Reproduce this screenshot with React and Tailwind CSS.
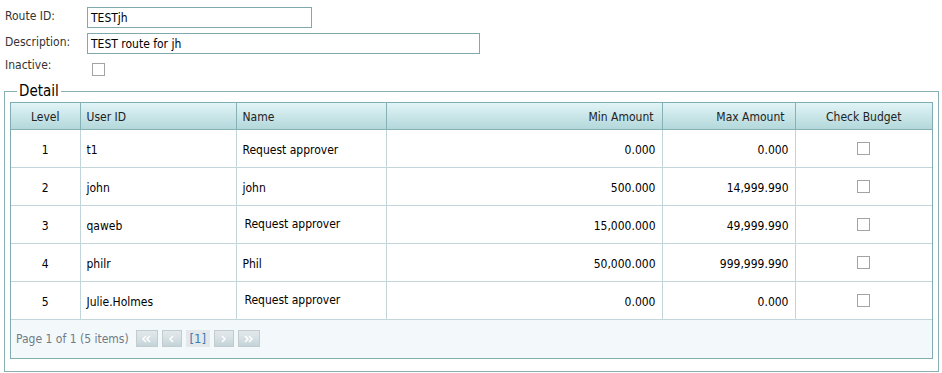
import React from 'react';

const rows = [
  { level: 1, user: 't1', name: 'Request approver', min: '0.000', max: '0.000' },
  { level: 2, user: 'john', name: 'john', min: '500.000', max: '14,999.990' },
  { level: 3, user: 'qaweb', name: 'Request approver', min: '15,000.000', max: '49,999.990', shift: true },
  { level: 4, user: 'philr', name: 'Phil', min: '50,000.000', max: '999,999.990' },
  { level: 5, user: 'Julie.Holmes', name: 'Request approver', min: '0.000', max: '0.000', shift: true },
];

function Box() {
  return <span className="inline-block h-[13px] w-[13px] border border-[#a3a3a3] bg-white align-middle" />;
}

// chevrons for the pager buttons
function Chevs({ dir = 'left', double = false }) {
  const pts = dir === 'left' ? ['6,3 3,6 6,9', '10,3 7,6 10,9'] : ['3,3 6,6 3,9', '7,3 10,6 7,9'];
  const single = dir === 'left' ? '8,3 5,6 8,9' : '5,3 8,6 5,9';
  return (
    <svg width="13" height="12" viewBox="0 0 13 12" fill="none" stroke="white" strokeWidth="1.5">
      {double ? pts.map((p) => <polyline key={p} points={p} />) : <polyline points={single} />}
    </svg>
  );
}

function PagerBtn({ children, w = 'w-[22px]' }) {
  return (
    <span className={`flex h-[17px] ${w} items-center justify-center border border-[#c4cbcf] bg-gradient-to-b from-[#e2e8eb] via-[#d6e0e4] to-[#c2d3d8]`}>
      {children}
    </span>
  );
}

export default function App() {
  return (
    <div className="h-[373px] w-[942px] bg-white font-['DejaVu_Sans_Condensed','DejaVu_Sans',sans-serif] text-[12px] text-[#333]">
      <div className="pt-[7px]">
        <div className="flex h-[21px] items-center">
          <span className="w-[87px] pl-[5px] -mt-[4px]">Route ID:</span>
          <div className="flex h-[21px] w-[225px] items-center border border-[#80a9ae] pl-[3px] text-black">TESTjh</div>
        </div>
        <div className="mt-[5px] flex h-[21px] items-center">
          <span className="w-[87px] pl-[5px] -mt-[4px]">Description:</span>
          <div className="flex h-[21px] w-[393px] items-center border border-[#80a9ae] pl-[3px] text-black">TEST route for jh</div>
        </div>
        <div className="mt-[3px] flex h-[21px] items-center">
          <span className="w-[92px] pl-[5px] -mt-[6px]">Inactive:</span>
          <span className="mt-[4px] inline-block h-[13px] w-[13px] border border-[#a3a3a3]" />
        </div>
      </div>

      <fieldset className="mx-[4px] mt-[4px] h-[290px] w-[934px] border border-[#87aeb0] px-[5px] pb-0 pt-0">
        <legend className="ml-[7px] px-[2px] text-[15px] leading-[18px] text-black">Detail</legend>
        <div className="mt-[2px] w-[923px] border border-[#7fadb2]">
          <table className="w-full border-collapse text-black">
            <thead>
              <tr className="h-[26px] bg-gradient-to-b from-[#e1f4f6] to-[#b3d8db] text-[#222]">
                <th className="w-[69px] border-r border-b border-[#86b2b6] pt-[2px] font-normal">Level</th>
                <th className="w-[156px] border-r border-b border-[#86b2b6] pl-[6px] pt-[2px] text-left font-normal">User ID</th>
                <th className="w-[150px] border-r border-b border-[#86b2b6] pl-[6px] pt-[2px] text-left font-normal">Name</th>
                <th className="w-[276px] border-r border-b border-[#86b2b6] pr-[8px] pt-[2px] text-right font-normal">Min Amount</th>
                <th className="w-[133px] border-r border-b border-[#86b2b6] pr-[10px] pt-[2px] text-right font-normal">Max Amount</th>
                <th className="border-b border-[#86b2b6] pt-[2px] font-normal">Check Budget</th>
              </tr>
            </thead>
            <tbody>
              {rows.map((r) => (
                <tr key={r.level} className="h-[38px]">
                  <td className="border-r border-b border-[#c2d5da] pt-[3px] text-center">{r.level}</td>
                  <td className="border-r border-b border-[#c2d5da] pl-[6px] pt-[3px]">{r.user}</td>
                  <td className="border-r border-b border-[#c2d5da] pl-[6px] pt-[3px]">
                    <span className={r.shift ? 'ml-[2px] relative -top-[2px]' : ''}>{r.name}</span>
                  </td>
                  <td className="border-r border-b border-[#c2d5da] pr-[6px] pt-[3px] text-right">{r.min}</td>
                  <td className="border-r border-b border-[#c2d5da] pr-[6px] pt-[3px] text-right">{r.max}</td>
                  <td className="border-b border-[#c2d5da] text-center">
                    <Box />
                  </td>
                </tr>
              ))}
            </tbody>
          </table>
          <div className="flex h-[38px] items-center gap-[4px] bg-[#f3f8fb] pl-[5px] text-[#6f7b86]">
            <span className="mr-[3px]">Page 1 of 1 (5 items)</span>
            <PagerBtn><Chevs dir="left" double /></PagerBtn>
            <PagerBtn w="w-[20px]"><Chevs dir="left" /></PagerBtn>
            <span className="flex h-[17px] w-[24px] items-center justify-center bg-[#e3e8eb] text-[13px] text-[#3f79b0]">[1]</span>
            <PagerBtn w="w-[20px]"><Chevs dir="right" /></PagerBtn>
            <PagerBtn><Chevs dir="right" double /></PagerBtn>
          </div>
        </div>
      </fieldset>
    </div>
  );
}
